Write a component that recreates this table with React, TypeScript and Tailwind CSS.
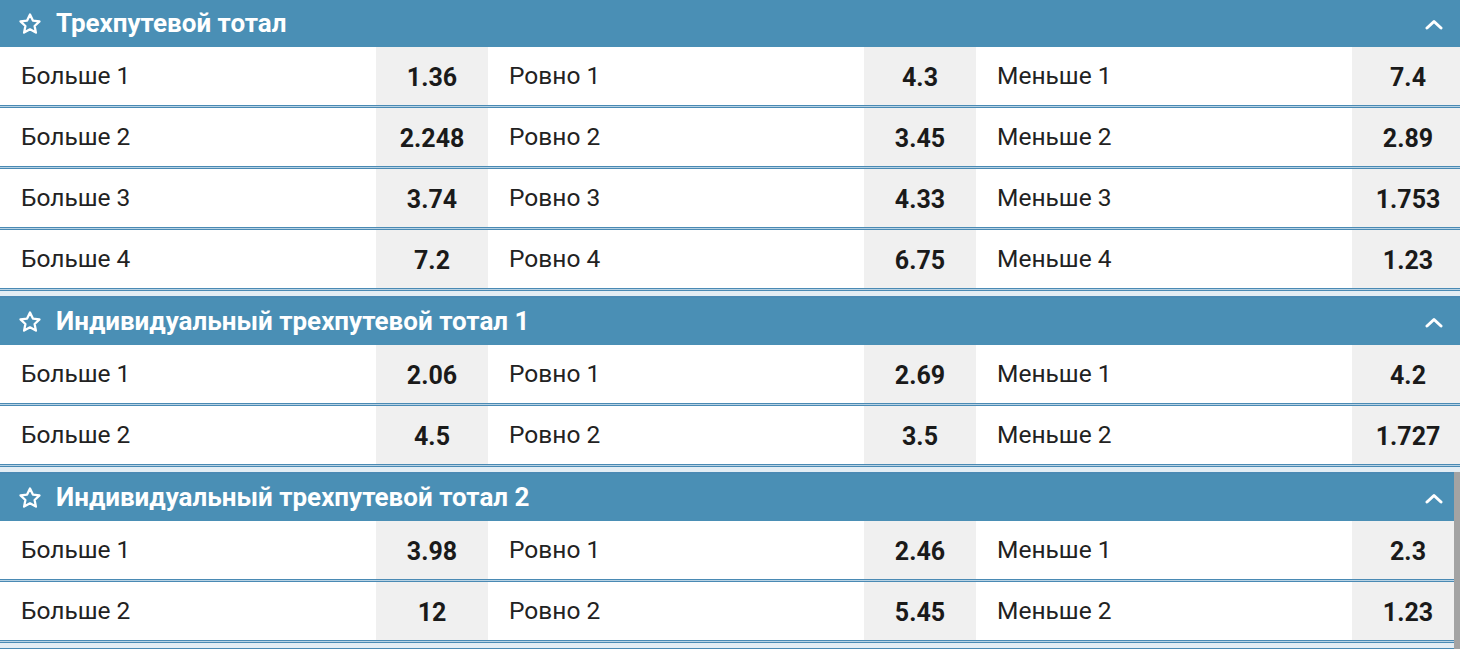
import React from "react";

type Row = [string, string, string, string, string, string];

const sections: { title: string; rows: Row[] }[] = [
  {
    title: "Трехпутевой тотал",
    rows: [
      ["Больше 1", "1.36", "Ровно 1", "4.3", "Меньше 1", "7.4"],
      ["Больше 2", "2.248", "Ровно 2", "3.45", "Меньше 2", "2.89"],
      ["Больше 3", "3.74", "Ровно 3", "4.33", "Меньше 3", "1.753"],
      ["Больше 4", "7.2", "Ровно 4", "6.75", "Меньше 4", "1.23"],
    ],
  },
  {
    title: "Индивидуальный трехпутевой тотал 1",
    rows: [
      ["Больше 1", "2.06", "Ровно 1", "2.69", "Меньше 1", "4.2"],
      ["Больше 2", "4.5", "Ровно 2", "3.5", "Меньше 2", "1.727"],
    ],
  },
  {
    title: "Индивидуальный трехпутевой тотал 2",
    rows: [
      ["Больше 1", "3.98", "Ровно 1", "2.46", "Меньше 1", "2.3"],
      ["Больше 2", "12", "Ровно 2", "5.45", "Меньше 2", "1.23"],
    ],
  },
];

function StarIcon() {
  return (
    <svg width="24" height="24" viewBox="0 0 24 24" fill="none" stroke="white" strokeWidth="2.3" strokeLinejoin="round">
      <path d="M12 2.5l2.9 6.1 6.6.8-4.9 4.6 1.3 6.6L12 17.3l-5.9 3.3 1.3-6.6-4.9-4.6 6.6-.8z" />
    </svg>
  );
}

function Chevron() {
  return (
    <svg width="18" height="11" viewBox="0 0 18 11" fill="none" stroke="white" strokeWidth="3" strokeLinecap="round" strokeLinejoin="round">
      <polyline points="2,9 9,2.5 16,9" />
    </svg>
  );
}

function Separator() {
  return <div className="h-[3px] border-y border-[#4a8ab4] bg-[#b9d3e4]" />;
}

function Cell({ label, odd }: { label: string; odd: string }) {
  return (
    <div className="flex h-full">
      <div className="flex-1 flex items-center pl-[21px] text-[24.5px] text-[#222]">{label}</div>
      <div className="w-[112px] bg-[#f0f0f0] flex items-center justify-center text-[25px] font-bold text-[#1a1a1a] pt-[3px]">
        {odd}
      </div>
    </div>
  );
}

function Header({ title }: { title: string }) {
  return (
    <div className="h-[47px] bg-[#4a8fb5] flex items-center pl-[18px] pr-[17px]">
      <StarIcon />
      <span className="ml-[14px] text-white font-bold text-[26px]">{title}</span>
      <div className="ml-auto pt-[1px]">
        <Chevron />
      </div>
    </div>
  );
}

function Section({ title, rows }: { title: string; rows: Row[] }) {
  return (
    <div>
      <Header title={title} />
      {rows.map((r, i) => (
        <div key={i}>
          <div className="h-[58px] grid grid-cols-[488px_488px_488px] bg-white">
            <Cell label={r[0]} odd={r[1]} />
            <Cell label={r[2]} odd={r[3]} />
            <Cell label={r[4]} odd={r[5]} />
          </div>
          <Separator />
        </div>
      ))}
      <div className="h-[7px] bg-[#e3edf4] border-b-2 border-[#4a8ab4]" />
    </div>
  );
}

export default function App() {
  return (
    <div
      className="relative w-[1460px] h-[649px] overflow-hidden bg-white"
      style={{ fontFamily: "Roboto, 'Noto Sans', sans-serif" }}
    >
      {sections.map((s, i) => (
        <Section key={i} title={s.title} rows={s.rows} />
      ))}
      <div className="h-[47px] bg-[#4a8fb5]" />
      <div className="absolute right-0 top-[472px] w-[6px] h-[177px] bg-[#a3a3a3]" />
    </div>
  );
}
